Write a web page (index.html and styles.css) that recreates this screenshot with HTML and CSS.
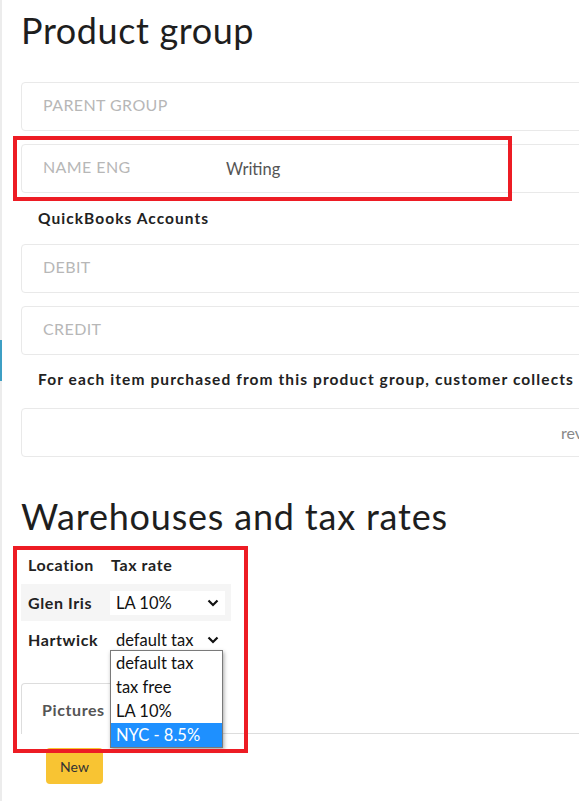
FILE: index.html
```html
<!DOCTYPE html>
<html>
<head>
<meta charset="utf-8">
<link rel="stylesheet" href="styles.css">
</head>
<body>
<div class="app">
  <div class="rail"><div class="rail-mark"></div></div>
  <div class="main">
    <h1 class="title">Product group</h1>

    <div class="field"><span class="field-label">PARENT GROUP</span></div>
    <div class="field field-named">
      <span class="field-label">NAME ENG</span><span class="field-value">Writing</span>
      <div class="annot annot-name"></div>
    </div>

    <div class="section-label">QuickBooks Accounts</div>
    <div class="field"><span class="field-label">DEBIT</span></div>
    <div class="field"><span class="field-label">CREDIT</span></div>

    <div class="section-label section-tax">For each item purchased from this product group, customer collects</div>
    <div class="field field-right"><span class="field-rev">rev</span></div>

    <h2 class="title title-2">Warehouses and tax rates</h2>

    <div class="wh">
      <div class="annot annot-wh"></div>
      <table class="wh-table">
        <thead>
          <tr><th class="c-loc">Location</th><th class="c-tax">Tax rate</th></tr>
        </thead>
        <tbody>
          <tr class="row-alt">
            <td class="c-loc">Glen Iris</td>
            <td class="c-tax"><div class="select select-boxed"><span>LA 10%</span><svg class="chev" viewBox="0 0 12 8" width="12" height="8"><path d="M1.5 1.5 L6 6 L10.5 1.5" fill="none" stroke="#111" stroke-width="2.2"/></svg></div></td>
          </tr>
          <tr>
            <td class="c-loc">Hartwick</td>
            <td class="c-tax">
              <div class="select"><span>default tax</span><svg class="chev" viewBox="0 0 12 8" width="12" height="8"><path d="M1.5 1.5 L6 6 L10.5 1.5" fill="none" stroke="#111" stroke-width="2.2"/></svg>
                <ul class="dropdown">
                  <li>default tax</li>
                  <li>tax free</li>
                  <li>LA 10%</li>
                  <li class="selected">NYC - 8.5%</li>
                </ul>
              </div>
            </td>
          </tr>
        </tbody>
      </table>

      <div class="tabs">
        <div class="tab">Pictures</div>
        <div class="tab-rest"></div>
      </div>
      <div class="actions"><button class="btn-new">New</button></div>
    </div>
  </div>
</div>
</body>
</html>
```

FILE: styles.css
```css
html, body {
  margin: 0;
  padding: 0;
  background: #fff;
  overflow: hidden;
  height: 801px;
}
body {
  font-family: "Lato", "Open Sans", sans-serif;
  color: #222;
}
.app {
  display: flex;
  width: 1000px;
  height: 801px;
}
.rail {
  width: 2px;
  background: #ececec;
  flex: none;
}
.rail-mark {
  margin-top: 340px;
  height: 41px;
  background: #3d9fc4;
}
.main {
  flex: 1;
  padding-left: 19px;
  position: relative;
}
.title {
  font-weight: 400;
  font-size: 36px;
  line-height: 42px;
  margin: 9px 0 31px 0;
  color: #1e1e1e;
  letter-spacing: 0.6px;
}
.title-2 {
  margin: 38px 0 0 0;
  letter-spacing: 0.8px;
}
.field {
  position: relative;
  height: 47px;
  border: 1px solid #e9e9e9;
  border-radius: 4px;
  display: flex;
  align-items: center;
  padding-left: 21px;
  margin-bottom: 13px;
}
.field-label {
  font-size: 16px;
  letter-spacing: 0.4px;
  color: #b7b7b7;
  width: 183px;
  margin-bottom: 4px;
}
.field-value {
  font-size: 16.5px;
  color: #555;
}
.field-right {
  padding-left: 0;
}
.field-rev {
  margin-left: 539px;
  font-size: 16px;
  color: #888;
}
.section-label {
  font-weight: 700;
  font-size: 15.5px;
  letter-spacing: 1.05px;
  line-height: 20px;
  padding-left: 17px;
  margin: 15px 0 16px 0;
  color: #222;
}
.section-tax {
  margin: 14px 0 19px 0;
  letter-spacing: 1.1px;
}
.annot {
  position: absolute;
  border: 4.5px solid #ed1c24;
  pointer-events: none;
}
.annot-name {
  left: -9px;
  top: -9px;
  width: 491px;
  height: 57px;
}
.wh {
  position: relative;
  padding-top: 7px;
}
.annot-wh {
  left: -8px;
  top: 9px;
  width: 227px;
  height: 199px;
  z-index: 3;
}
.wh-table {
  border-collapse: collapse;
  width: 210px;
  font-size: 16px;
  letter-spacing: 0.6px;
}
.wh-table th {
  text-align: left;
  font-weight: 700;
  height: 40px;
  padding: 0;
}
.wh-table td {
  font-weight: 700;
  padding: 0;
  height: 37px;
}
.wh-table .c-loc {
  padding-left: 7px;
  width: 83px;
}
.wh-table .c-tax {
  padding-left: 0;
}
.row-alt {
  background: #f5f5f5;
}
.select {
  position: relative;
  display: flex;
  align-items: center;
  justify-content: space-between;
  width: 103px;
  height: 24px;
  padding: 0 6px 0 6px;
  margin-left: -1px;
  font-weight: 400;
  font-size: 16.5px;
  letter-spacing: 0;
  color: #111;
}
.select-boxed {
  background: #fff;
}
.chev {
  display: block;
  margin-top: 1px;
}
.dropdown {
  position: absolute;
  left: 0;
  top: 22px;
  width: 111px;
  margin: 0;
  padding: 0;
  list-style: none;
  background: #fff;
  border: 1px solid #7a7a7a;
  box-shadow: 1px 2px 4px rgba(0,0,0,0.35);
  z-index: 2;
}
.dropdown li {
  height: 24px;
  line-height: 24px;
  padding-left: 5px;
  font-size: 16.5px;
  color: #111;
}
.dropdown li.selected {
  background: #1e90ff;
  color: #fff;
}
.tabs {
  display: flex;
  margin-top: 25px;
  height: 51px;
}
.tab {
  width: 84px;
  padding-left: 20px;
  border: 1px solid #ddd;
  border-bottom: none;
  border-radius: 4px 4px 0 0;
  display: flex;
  align-items: center;
  font-weight: 700;
  font-size: 16px;
  letter-spacing: 0.6px;
  color: #555;
}
.tab-rest {
  flex: 1;
  border-bottom: 1px solid #ddd;
}
.actions {
  padding-left: 25px;
  padding-top: 14px;
}
.btn-new {
  width: 57px;
  height: 36px;
  border: none;
  border-radius: 4px;
  background: #f8c433;
  font-family: "Lato", "Open Sans", sans-serif;
  font-size: 14px;
  color: #333;
  padding: 0;
}
```
